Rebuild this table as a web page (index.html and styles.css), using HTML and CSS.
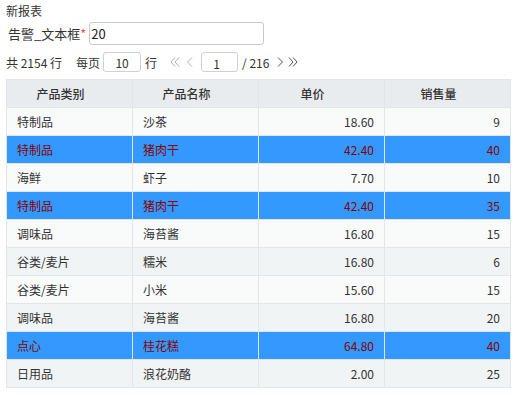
FILE: index.html
```html
<!DOCTYPE html>
<html lang="zh-CN">
<head>
  <meta charset="UTF-8">
  <title>新报表</title>
  <link rel="stylesheet" href="styles.css">
</head>
<body>
  <div class="page">
    <div class="title">新报表</div>

    <!-- Parameter bar -->
    <div class="param-row">
      <label class="param-label">告警_文本框<span class="required">*</span></label>
      <input class="param-input" type="text" value="20">
    </div>

    <!-- Pager -->
    <div class="pager">
      <span>共 2154 行</span>
      <span class="per-page">每页</span>
      <input class="pager-input size" type="text" value="10">
      <span class="rows-unit">行</span>
      <svg class="nav first muted" width="10" height="12" viewBox="0 0 10 12"><path d="M5 1.5 L1 6 L5 10.5 M9 1.5 L5 6 L9 10.5" fill="none" stroke="currentColor" stroke-width="1"/></svg>
      <svg class="nav prev muted" width="7" height="12" viewBox="0 0 7 12"><path d="M6 1.5 L1.5 6 L6 10.5" fill="none" stroke="currentColor" stroke-width="1"/></svg>
      <input class="pager-input page" type="text" value="1">
      <span class="total">/ 216</span>
      <svg class="nav next" width="7" height="12" viewBox="0 0 7 12"><path d="M1 1.5 L5.5 6 L1 10.5" fill="none" stroke="currentColor" stroke-width="1"/></svg>
      <svg class="nav last" width="10" height="12" viewBox="0 0 10 12"><path d="M1 1.5 L5 6 L1 10.5 M5 1.5 L9 6 L5 10.5" fill="none" stroke="currentColor" stroke-width="1"/></svg>
    </div>

    <table class="report">
      <thead>
        <tr>
          <th>产品类别</th>
          <th>产品名称</th>
          <th>单价</th>
          <th>销售量</th>
        </tr>
      </thead>
      <tbody>
        <tr><td>特制品</td><td>沙茶</td><td class="num">18.60</td><td class="num">9</td></tr>
        <tr class="alert"><td>特制品</td><td>猪肉干</td><td class="num">42.40</td><td class="num">40</td></tr>
        <tr><td>海鲜</td><td>虾子</td><td class="num">7.70</td><td class="num">10</td></tr>
        <tr class="alert"><td>特制品</td><td>猪肉干</td><td class="num">42.40</td><td class="num">35</td></tr>
        <tr><td>调味品</td><td>海苔酱</td><td class="num">16.80</td><td class="num">15</td></tr>
        <tr><td>谷类/麦片</td><td>糯米</td><td class="num">16.80</td><td class="num">6</td></tr>
        <tr><td>谷类/麦片</td><td>小米</td><td class="num">15.60</td><td class="num">15</td></tr>
        <tr><td>调味品</td><td>海苔酱</td><td class="num">16.80</td><td class="num">20</td></tr>
        <tr class="alert"><td>点心</td><td>桂花糕</td><td class="num">64.80</td><td class="num">40</td></tr>
        <tr><td>日用品</td><td>浪花奶酪</td><td class="num">2.00</td><td class="num">25</td></tr>
      </tbody>
    </table>
  </div>
</body>
</html>
```

FILE: styles.css
```css
* {
  margin: 0;
  padding: 0;
  box-sizing: border-box;
}

body {
  font-family: "Noto Sans CJK SC", "Noto Sans", sans-serif;
  font-size: 12px;
  color: #333;
  background: #fff;
}

.page {
  padding: 3px 12px 0 6px;
}

.title {
  height: 16px;
  line-height: 16px;
  color: #333;
}

/* Parameter row */
.param-row {
  display: flex;
  align-items: center;
  margin-top: 3px;
  padding-left: 2px;
}

.param-label {
  font-size: 13px;
  color: #333;
  line-height: 23px;
}

.required {
  color: #ff4d4f;
}

.param-input {
  width: 175px;
  height: 23px;
  margin-left: 3px;
  border: 1px solid #c8c8c8;
  border-radius: 3px;
  padding: 0 1px;
  font-family: inherit;
  font-size: 13px;
  color: #222;
  outline: none;
}

/* Pager */
.pager {
  display: flex;
  align-items: center;
  margin-top: 7px;
  height: 20px;
  color: #333;
}

.per-page {
  margin-left: 14px;
}

.pager-input {
  width: 38px;
  height: 20px;
  border: 1px solid #d0d0d0;
  border-radius: 3px;
  text-align: center;
  font-family: inherit;
  font-size: 12px;
  color: #333;
  outline: none;
}

.pager-input.size {
  margin-left: 3px;
}

.pager-input.page {
  width: 37px;
  margin-left: 8px;
}

.rows-unit {
  margin-left: 4px;
}

.total {
  margin-left: 4px;
}

.nav {
  color: #555;
  flex: none;
}

.nav.muted {
  color: #b0b0b0;
}

.nav.first {
  margin-left: 13px;
}

.nav.prev {
  margin-left: 6px;
}

.nav.next {
  margin-left: 8px;
}

.nav.last {
  margin-left: 4px;
}

/* Report table */
.report {
  margin-top: 7px;
  width: 505px;
  border-collapse: collapse;
  table-layout: fixed;
}

.report th,
.report td {
  height: 28px;
  border: 1px solid #e3e6e9;
}

.report th {
  background: #e9ecef;
  font-weight: 500;
  text-align: center;
  padding: 0 18px 0 0;
}

.report td {
  padding: 0 10px;
  background: #f9fafa;
}

.report tbody tr:nth-child(even) td {
  background: #f1f4f5;
}

.report td.num {
  text-align: right;
}

.report tr.alert td,
.report tbody tr.alert:nth-child(even) td {
  background: #3399ff;
  color: #8b0000;
}
```
